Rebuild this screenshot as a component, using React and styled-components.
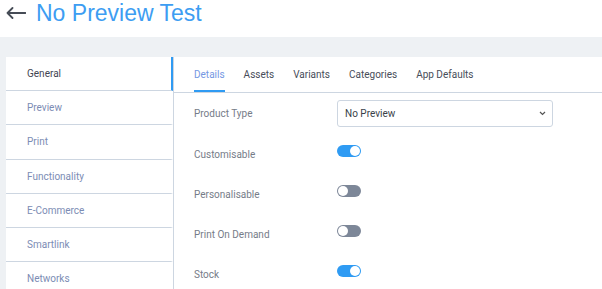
import React from "react";
import styled, { createGlobalStyle } from "styled-components";

const Global = createGlobalStyle`
  html, body { margin: 0; padding: 0; background: #eef1f4; }
  body { font-family: Roboto, "Open Sans", sans-serif; overflow: hidden; }
`;

const Page = styled.div`
  width: 602px;
  height: 289px;
  overflow: hidden;
  background: #eef1f4;
`;

const Header = styled.header`
  height: 37px;
  background: #ffffff;
  display: flex;
  align-items: center;
  gap: 10px;
  padding-left: 6px;
  box-sizing: border-box;
  padding-bottom: 12px;
`;

const BackIcon = styled.svg`
  width: 20px;
  height: 12px;
  display: block;
`;

const Title = styled.h1`
  margin: 0;
  font-family: "Liberation Sans", Arial, sans-serif;
  font-weight: 400;
  font-size: 23px;
  line-height: 24px;
  color: #3d9df2;
`;

const Body = styled.div`
  display: flex;
  padding: 20px 0 0 6px;
`;

const Sidebar = styled.nav`
  width: 167px;
  flex: none;
  background: #ffffff;
  display: flex;
  flex-direction: column;
`;

const SideItem = styled.div`
  height: 33.2px;
  display: flex;
  align-items: center;
  padding-left: 21px;
  font-size: 10px;
  color: ${(p) => (p.$active ? "#3f4552" : "#7c8cb4")};
  border-bottom: 1px solid #cdd6e1;
  border-right: 2px solid ${(p) => (p.$active ? "#2f9bf3" : "transparent")};
  box-sizing: content-box;
`;

const Main = styled.section`
  flex: 1;
  background: #ffffff;
  border-left: 1px solid #cdd6e1;
  min-height: 240px;
`;

const Tabs = styled.div`
  height: 35px;
  display: flex;
  padding-left: 20px;
  border-bottom: 1px solid #cdd6e1;
`;

const Tab = styled.div`
  height: 35px;
  box-sizing: border-box;
  display: flex;
  align-items: center;
  margin-right: ${(p) => p.$mr}px;
  font-size: 10px;
  color: ${(p) => (p.$active ? "#7597e3" : "#474d59")};
  border-bottom: 2px solid ${(p) => (p.$active ? "#2f9bf3" : "transparent")};
  padding-top: 1px;
`;

const Form = styled.div`
  padding: 0 0 0 20px;
`;

const Row = styled.div`
  height: 40px;
  display: grid;
  grid-template-columns: 143px 216px;
  align-items: center;
`;

const Label = styled.div`
  font-size: 10px;
  color: #767c88;
  padding-top: ${(p) => (p.$low ? 2 : 0)}px;
`;

const Select = styled.div`
  height: 27px;
  box-sizing: border-box;
  border: 1px solid #cdd6e1;
  border-radius: 3px;
  display: flex;
  align-items: center;
  justify-content: space-between;
  padding: 0 6px 0 7px;
  font-size: 10px;
  color: #3a3f49;
`;

const Toggle = styled.div`
  width: 24px;
  height: 12px;
  border-radius: 6px;
  background: ${(p) => (p.$on ? "#2f9bf3" : "#7d8798")};
  position: relative;
  margin-top: -4px;
  &::after {
    content: "";
    position: absolute;
    top: 1px;
    left: ${(p) => (p.$on ? "13px" : "1px")};
    width: 10px;
    height: 10px;
    border-radius: 50%;
    background: #ffffff;
  }
`;

const sideItems = ["General", "Preview", "Print", "Functionality", "E-Commerce", "Smartlink", "Networks"];
const tabs = [
  ["Details", 19],
  ["Assets", 19],
  ["Variants", 19],
  ["Categories", 19],
  ["App Defaults", 0],
];
const toggles = [
  ["Customisable", true],
  ["Personalisable", false],
  ["Print On Demand", false],
  ["Stock", true],
];

export default function App() {
  return (
    <Page>
      <Global />
      <Header>
        <BackIcon viewBox="0 0 20 12">
          <path d="M19.5 6H1.5M6.5 1L1.5 6l5 5" fill="none" stroke="#464c56" strokeWidth="1.8" strokeLinecap="round" strokeLinejoin="round" />
        </BackIcon>
        <Title>No Preview Test</Title>
      </Header>
      <Body>
        <Sidebar>
          {sideItems.map((s, i) => (
            <SideItem key={s} $active={i === 0}>{s}</SideItem>
          ))}
        </Sidebar>
        <Main>
          <Tabs>
            {tabs.map(([t, mr], i) => (
              <Tab key={t} $active={i === 0} $mr={mr}>{t}</Tab>
            ))}
          </Tabs>
          <Form>
            <Row>
              <Label>Product Type</Label>
              <Select>
                <span>No Preview</span>
                <svg width="7" height="5" viewBox="0 0 7 5">
                  <path d="M1 1l2.5 2.5L6 1" fill="none" stroke="#555" strokeWidth="1.2" />
                </svg>
              </Select>
            </Row>
            {toggles.map(([l, on]) => (
              <Row key={l}>
                <Label $low>{l}</Label>
                <Toggle $on={on} />
              </Row>
            ))}
          </Form>
        </Main>
      </Body>
    </Page>
  );
}
